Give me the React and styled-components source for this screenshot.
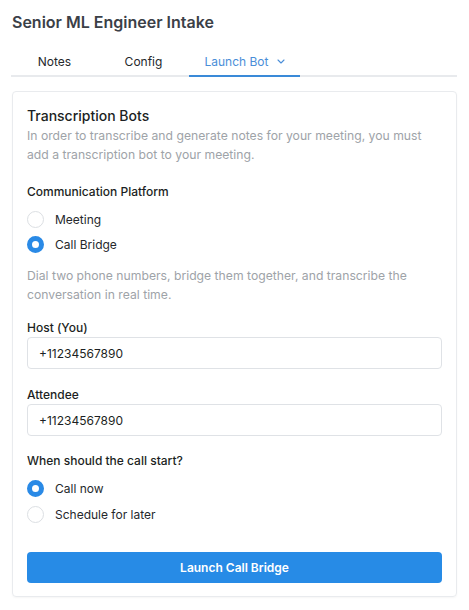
import React, { useState } from 'react';
import styled, { createGlobalStyle } from 'styled-components';

const GlobalStyle = createGlobalStyle`
  body {
    margin: 0;
    background: #ffffff;
    font-family: Inter, "Liberation Sans", sans-serif;
    color: #1f2328;
  }
`;

const Page = styled.div`
  width: 469px;
  padding: 11px 12px 12px 11px;
  box-sizing: border-box;
`;

const Title = styled.h1`
  margin: 0 0 0 1px;
  font-size: 16px;
  font-weight: 600;
  color: #3b4047;
  line-height: 22px;
`;

const Tabs = styled.div`
  display: flex;
  margin-top: 12px;
  border-bottom: 2px solid #e8eaed;
  height: 32px;
  box-sizing: border-box;
`;

const Tab = styled.div`
  width: ${(p) => p.$w}px;
  display: flex;
  align-items: center;
  justify-content: center;
  gap: 8px;
  font-size: 12px;
  color: ${(p) => (p.$active ? '#4a8ed8' : '#25282c')};
  margin-bottom: -2px;
  border-bottom: 2px solid ${(p) => (p.$active ? '#3a8ad8' : 'transparent')};
  padding-top: 3px;
  box-sizing: border-box;
`;

const Card = styled.div`
  margin: 14px 0 0 1px;
  border: 1px solid #e9ebee;
  border-radius: 4px;
  padding: 14px 14px 13px 14px;
  box-shadow: 0 1px 2px rgba(0, 0, 0, 0.04);
`;

const CardTitle = styled.h2`
  margin: 0;
  font-size: 14px;
  font-weight: 500;
  color: #1c1f23;
  line-height: 20px;
`;

const Muted = styled.p`
  margin: ${(p) => p.$m || '0'};
  max-width: 395px;
  font-size: 12.2px;
  line-height: 19px;
  color: #9ea3a8;
`;

const Label = styled.div`
  font-size: 12px;
  font-weight: 500;
  color: #1c1f23;
  line-height: 18px;
  margin: ${(p) => p.$m || '0'};
`;

const RadioGroup = styled.div`
  display: flex;
  flex-direction: column;
  gap: ${(p) => p.$gap}px;
  margin-top: 10px;
`;

const RadioRow = styled.label`
  display: flex;
  align-items: center;
  gap: 11px;
  font-size: 12px;
  color: #25282c;
  height: 17px;
  cursor: pointer;
`;

const Dot = styled.span`
  width: 17px;
  height: 17px;
  box-sizing: border-box;
  border-radius: 50%;
  border: ${(p) => (p.$on ? '5px solid #2a8ae6' : '1px solid #dcdfe3')};
  background: #fff;
  flex-shrink: 0;
`;

const Input = styled.input`
  display: block;
  width: 100%;
  box-sizing: border-box;
  height: 32px;
  margin: 0;
  border: 1px solid #dfe2e6;
  border-radius: 4px;
  padding: 0 11px;
  font-family: Inter, "Liberation Sans", sans-serif;
  font-size: 12px;
  color: #1c1f23;
  outline: none;
`;

const Button = styled.button`
  display: block;
  width: 100%;
  height: 31px;
  margin-top: 29px;
  border: none;
  border-radius: 4px;
  background: #278be6;
  color: #fff;
  font-family: Inter, "Liberation Sans", sans-serif;
  font-size: 12px;
  font-weight: 600;
  cursor: pointer;
`;

const Chevron = () => (
  <svg width="8" height="5" viewBox="0 0 8 5" fill="none">
    <path d="M1 1l3 3 3-3" stroke="#4a8ed8" strokeWidth="1.1" strokeLinecap="round" strokeLinejoin="round" />
  </svg>
);

function Radio({ options, value, onChange, gap = 8 }) {
  return (
    <RadioGroup $gap={gap}>
      {options.map((o) => (
        <RadioRow key={o} onClick={() => onChange(o)}>
          <Dot $on={value === o} />
          {o}
        </RadioRow>
      ))}
    </RadioGroup>
  );
}

export default function App() {
  const [platform, setPlatform] = useState('Call Bridge');
  const [when, setWhen] = useState('Call now');

  return (
    <Page>
      <GlobalStyle />
      <Title>Senior ML Engineer Intake</Title>
      <Tabs>
        <Tab $w={87}>Notes</Tab>
        <Tab $w={91}>Config</Tab>
        <Tab $w={111} $active>
          Launch Bot <Chevron />
        </Tab>
      </Tabs>
      <Card>
        <CardTitle>Transcription Bots</CardTitle>
        <Muted>
          In order to transcribe and generate notes for your meeting, you must
          add a transcription bot to your meeting.
        </Muted>
        <Label $m="19px 0 0">Communication Platform</Label>
        <Radio options={['Meeting', 'Call Bridge']} value={platform} onChange={setPlatform} />
        <Muted $m="13px 0 0">
          Dial two phone numbers, bridge them together, and transcribe the
          conversation in real time.
        </Muted>
        <Label $m="15px 0 0">Host (You)</Label>
        <Input defaultValue="+11234567890" />
        <Label $m="17px 0 0">Attendee</Label>
        <Input defaultValue="+11234567890" />
        <Label $m="16px 0 0">When should the call start?</Label>
        <Radio options={['Call now', 'Schedule for later']} value={when} onChange={setWhen} gap={9} />
        <Button>Launch Call Bridge</Button>
      </Card>
    </Page>
  );
}
